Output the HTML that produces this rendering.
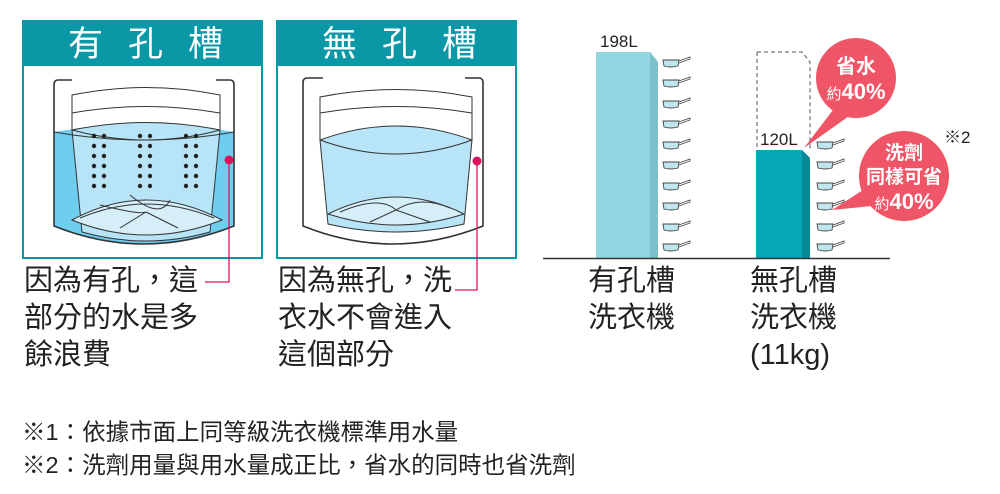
<!DOCTYPE html>
<html><head><meta charset="utf-8"><style>
body{margin:0;background:#fff;width:1000px;height:494px;overflow:hidden;font-family:"Liberation Sans","Noto Sans CJK TC",sans-serif}
svg{position:absolute;left:0;top:0}
.t{position:absolute;font-size:29px;line-height:37px;color:#222;white-space:nowrap}
.n{position:absolute;font-size:23.5px;color:#222;white-space:nowrap}
</style></head><body>
<svg width="1000" height="494" viewBox="0 0 1000 494">
<defs>
<g id="cup"><path d="M0,2 L16,2 L15,8 Q8,10 1,8 Z" fill="#bfe6ef" stroke="#444" stroke-width="0.9"/><path d="M16,3 L27,-1 L27,1 L16,5" fill="#fff" stroke="#444" stroke-width="0.8"/></g>
</defs>
<rect x="23" y="21" width="239" height="237" fill="#fff" stroke="#0a98a6" stroke-width="2"/>
<rect x="22" y="20" width="241" height="46" fill="#0a98a6"/>
<text x="68" y="56" font-size="35" fill="#fff" font-family="Noto Sans CJK TC,sans-serif" letter-spacing="25">有孔槽</text>
<path d="M54,132 Q144,116 234,132 L234,226 Q144,262 54,226 Z" fill="#6fcdf0"/>
<path d="M72,130 Q146,115 220,130 L210,232 Q146,250 82,232 Z" fill="#b7e4f6" stroke="#333" stroke-width="1"/>
<path d="M54,132 Q144,148 234,132" fill="none" stroke="#333" stroke-width="1"/>
<path d="M72,130 Q146,150 220,130" fill="none" stroke="#333" stroke-width="1"/>
<path d="M72,95 Q146,80 220,95 L220,113 Q146,100 72,113 Z" fill="#fff" stroke="#333" stroke-width="1"/>
<path d="M72,95 L72,130 M220,95 L220,130" stroke="#333" stroke-width="1"/>
<path d="M72,220 Q146,180 222,220 Q146,250 72,220 Z" fill="#d5eef8" stroke="#333" stroke-width="1"/>
<path d="M80,218 Q146,190 214,218 M100,205 Q140,215 146,212 M130,195 Q160,220 170,200 M146,212 L120,228 M146,212 L178,228" fill="none" stroke="#333" stroke-width="1"/>
<path d="M72,80 L58,80 Q54,80 54,85 L54,226 Q144,262 234,226 L234,85 Q234,80 230,80 L216,80" fill="none" stroke="#333" stroke-width="1.6"/>
<g fill="#222">
<g id="dc"><circle cx="94" cy="136" r="2.2"/><circle cx="94" cy="146" r="2.2"/><circle cx="94" cy="156" r="2.2"/><circle cx="94" cy="166" r="2.2"/><circle cx="94" cy="176" r="2.2"/><circle cx="94" cy="186" r="2.2"/></g>
<use href="#dc" x="10"/><use href="#dc" x="46"/><use href="#dc" x="56"/><use href="#dc" x="92"/><use href="#dc" x="102"/>
</g>
<circle cx="229" cy="160" r="4.5" fill="#e0115f"/>
<path d="M229,160 L229,282 L205,282" fill="none" stroke="#e0115f" stroke-width="1.3"/>
<rect x="277" y="21" width="239" height="237" fill="#fff" stroke="#0a98a6" stroke-width="2"/>
<rect x="276" y="20" width="241" height="46" fill="#0a98a6"/>
<text x="322" y="56" font-size="35" fill="#fff" font-family="Noto Sans CJK TC,sans-serif" letter-spacing="25">無孔槽</text>
<path d="M320,140 Q396,112 472,140 L464,224 Q396,240 328,224 Z" fill="#b7e4f6" stroke="#333" stroke-width="1"/>
<path d="M320,140 Q396,168 472,140" fill="none" stroke="#333" stroke-width="1"/>
<path d="M320,97 Q396,82 472,97 L472,113 Q396,100 320,113 Z" fill="#fff" stroke="#333" stroke-width="1"/>
<path d="M320,97 L320,140 M472,97 L472,140" stroke="#333" stroke-width="1"/>
<path d="M328,214 Q396,180 464,214 Q396,236 328,214 Z" fill="#d5eef8" stroke="#333" stroke-width="1"/>
<path d="M340,212 Q380,195 396,210 Q420,195 450,208 M396,210 L370,222 M396,210 L430,222" fill="none" stroke="#333" stroke-width="1"/>
<path d="M323,78 L307,78 Q303,78 303,83 L303,226 Q393,262 483,226 L483,83 Q483,78 479,78 L465,78" fill="none" stroke="#333" stroke-width="1.6"/>
<circle cx="477" cy="161" r="4.5" fill="#e0115f"/>
<path d="M477,161 L477,290 L455,290" fill="none" stroke="#e0115f" stroke-width="1.3"/>
<path d="M596,52 L650,52 L658,62 L658,258 L596,258 Z" fill="#93d5e0"/>
<path d="M650,52 L658,62 L658,258 L650,258 Z" fill="#7dbfcb"/>
<text x="600" y="47" font-size="17" fill="#222">198L</text>
<path d="M757,52 L802,52 L810,62 L810,150" fill="none" stroke="#555" stroke-width="1" stroke-dasharray="4,3"/>
<path d="M757,52 L757,150" stroke="#555" stroke-width="1" stroke-dasharray="4,3"/>
<path d="M756,150 L802,150 L810,158 L810,258 L756,258 Z" fill="#05a9b6"/>
<path d="M802,150 L810,158 L810,258 L802,258 Z" fill="#078a95"/>
<text x="760" y="145" font-size="17" fill="#222">120L</text>
<line x1="543" y1="258.5" x2="890" y2="258.5" stroke="#333" stroke-width="1.5"/>
<use href="#cup" x="663" y="58"/><use href="#cup" x="663" y="78"/><use href="#cup" x="663" y="99"/><use href="#cup" x="663" y="119"/><use href="#cup" x="663" y="140"/><use href="#cup" x="663" y="160"/><use href="#cup" x="663" y="181"/><use href="#cup" x="663" y="201"/><use href="#cup" x="663" y="222"/><use href="#cup" x="663" y="242"/>
<use href="#cup" x="817" y="140"/><use href="#cup" x="817" y="160"/><use href="#cup" x="817" y="181"/><use href="#cup" x="817" y="201"/><use href="#cup" x="817" y="222"/><use href="#cup" x="817" y="242"/>
<path d="M804,148 L836,106 L852,114 Z" fill="#ef5467"/>
<circle cx="856" cy="78" r="40" fill="#ef5467"/>
<text x="856" y="73" font-size="20" fill="#fff" text-anchor="middle" font-weight="bold">省水</text>
<text x="856" y="99" font-size="19" fill="#fff" text-anchor="middle"><tspan font-size="15">約</tspan><tspan font-weight="bold" font-size="22">40%</tspan></text>
<path d="M832,210 L866,188 L872,206 Z" fill="#ef5467"/>
<circle cx="904" cy="176" r="45" fill="#ef5467"/>
<text x="904" y="159" font-size="19" fill="#fff" text-anchor="middle" font-weight="bold">洗劑</text>
<text x="904" y="183" font-size="19" fill="#fff" text-anchor="middle" font-weight="bold">同樣可省</text>
<text x="904" y="209" font-size="19" fill="#fff" text-anchor="middle"><tspan font-size="15">約</tspan><tspan font-weight="bold" font-size="22">40%</tspan></text>
<text x="944" y="143" font-size="17" fill="#222">※2</text>
</svg>
<div class="t" style="left:24px;top:263px">因為有孔，這<br>部分的水是多<br>餘浪費</div>
<div class="t" style="left:278px;top:263px">因為無孔，洗<br>衣水不會進入<br>這個部分</div>
<div class="t" style="left:588px;top:263px">有孔槽<br>洗衣機</div>
<div class="t" style="left:750px;top:263px">無孔槽<br>洗衣機<br>(11kg)</div>
<div class="n" style="left:22px;top:413px">※1：依據市面上同等級洗衣機標準用水量</div>
<div class="n" style="left:22px;top:446px">※2：洗劑用量與用水量成正比，省水的同時也省洗劑</div>
</body></html>
